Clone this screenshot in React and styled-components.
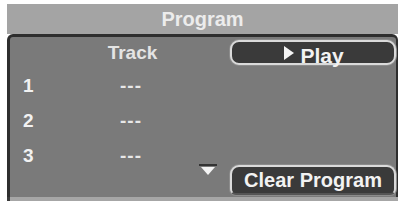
import React from "react";
import styled, { createGlobalStyle } from "styled-components";

const GlobalStyle = createGlobalStyle`
  html, body {
    margin: 0;
    padding: 0;
    background: #ffffff;
    font-family: "Liberation Sans", Arial, sans-serif;
  }
`;

const Frame = styled.div`
  width: 391px;
  margin: 4px 0 0 7px;
`;

const Header = styled.div`
  height: 30px;
  line-height: 30px;
  background: #a4a4a4;
  color: #ececec;
  font-weight: bold;
  font-size: 20px;
  text-align: center;
`;

const Panel = styled.div`
  height: 160px;
  background: #7a7a7a;
  border: 3px solid #2e2e2e;
  border-right-width: 2px;
  border-bottom: none;
  border-radius: 6px 6px 0 0;
  display: grid;
  grid-template-columns: 220px 1fr;
`;

const Footer = styled.div`
  height: 4px;
  background: #a6a6a6;
  border-left: 3px solid #3a3a3a;
`;

const List = styled.div`
  display: grid;
  grid-template-columns: 44px 128px 1fr;
  grid-template-rows: 22px repeat(3, 35px);
  padding: 5px 0 0 13px;
  color: #f2f2f2;
  font-weight: bold;
  font-size: 19px;
`;

const Head = styled.div`
  grid-column: 2;
  line-height: 22px;
  text-align: center;
  color: #e4e4e4;
  padding-left: 3px;
  margin-bottom: 4px;
`;

const Num = styled.div`
  grid-column: 1;
  line-height: 35px;
  margin-top: 4px;
`;

const Dash = styled.div`
  grid-column: 2;
  line-height: 35px;
  margin-top: 4px;
  text-align: center;
  letter-spacing: 1px;
  color: #e8e8e8;
`;

const ScrollMark = styled.div`
  grid-column: 3;
  grid-row: 4;
  align-self: end;
  display: flex;
  padding: 0 0 0 3px;
  margin-bottom: -8px;
`;

const Side = styled.div`
  display: flex;
  flex-direction: column;
  justify-content: space-between;
`;

const Button = styled.button`
  font-family: "Liberation Sans", Arial, sans-serif;
  font-weight: bold;
  font-size: ${(p) => p.$size}px;
  color: #f2f2f2;
  background: #3a3a3a;
  border: 2px solid #dadada;
  border-radius: 9px;
  padding: 0;
  margin: 0;
  width: 100%;
  height: ${(p) => p.$h}px;
  display: flex;
  align-items: center;
  justify-content: center;
  gap: 6px;
  box-shadow: 0 0 0 1px #8c8c8c;
`;

const PlayButton = styled(Button)`
  margin-top: 3px;
  padding-top: 7px;
  padding-left: 2px;
  border-width: 2.5px;
`;

const PlayIcon = styled.svg`
  margin-top: -6px;
`;

const ClearButton = styled(Button)`
  border-bottom-color: #555;
  border-radius: 9px 9px 6px 6px;
  margin-bottom: 2px;
  font-weight: 600;
`;

const rows = ["1", "2", "3"];

export default function App() {
  return (
    <>
      <GlobalStyle />
      <Frame>
        <Header>Program</Header>
        <Panel>
          <List>
            <Head>Track</Head>
            <span />
            {rows.map((n) => (
              <React.Fragment key={n}>
                <Num>{n}</Num>
                <Dash>---</Dash>
              </React.Fragment>
            ))}
            <ScrollMark>
              <svg width="20" height="13" viewBox="0 0 20 13">
                <rect x="1" y="0" width="18" height="2" fill="#333" />
                <polygon points="3,3 17,3 10,11" fill="#f4f4f4" />
              </svg>
            </ScrollMark>
          </List>
          <Side>
            <PlayButton $size={21} $h={25}>
              <PlayIcon width="10" height="14" viewBox="0 0 10 14">
                <polygon points="0,0 10,7 0,14" fill="#f4f4f4" />
              </PlayIcon>
              Play
            </PlayButton>
            <ClearButton $size={20} $h={30}>Clear Program</ClearButton>
          </Side>
        </Panel>
        <Footer />
      </Frame>
    </>
  );
}
